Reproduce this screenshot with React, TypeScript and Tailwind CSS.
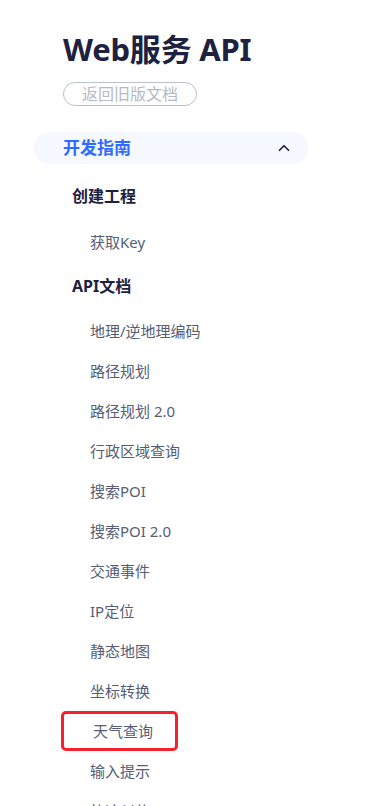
import { ChevronUp } from 'lucide-react';

const apiDocs = [
  '地理/逆地理编码',
  '路径规划',
  '路径规划 2.0',
  '行政区域查询',
  '搜索POI',
  '搜索POI 2.0',
  '交通事件',
  'IP定位',
  '静态地图',
  '坐标转换',
  '天气查询',
  '输入提示',
  '轨迹纠偏',
];

export default function App() {
  return (
    <div
      className="w-[366px] h-[806px] overflow-hidden bg-white"
      style={{ fontFamily: '"Noto Sans", "Noto Sans CJK SC", sans-serif' }}
    >
      <div className="pt-[25px] pl-[63px]">
        <h1 className="text-[31px] leading-[48px] font-bold text-[#1d2240] tracking-[-0.2px]">Web服务 API</h1>
        <button className="mt-[9px] h-[24px] w-[134px] rounded-full border border-[#b9c0cf] text-[16px] leading-[22px] text-[#b4bac6] bg-white">
          返回旧版文档
        </button>
      </div>

      <div className="mt-[26px] ml-[34px] w-[274px] h-[32px] rounded-[16px] bg-[#f5f8ff] flex items-center justify-between pl-[29px] pr-[15px]">
        <span className="text-[17px] font-bold text-[#2f6bff]">开发指南</span>
        <ChevronUp size={18} strokeWidth={2.25} className="text-[#1d2240]" />
      </div>

      <div className="pl-[72px] mt-[16px]">
        <div className="h-[32px] flex items-center text-[16px] font-bold text-[#1d2240]">创建工程</div>
      </div>
      <div className="pl-[90px] mt-[14px] h-[32px] flex items-center text-[15px] text-[#565d74]">获取Key</div>
      <div className="pl-[72px] mt-[12px] h-[32px] flex items-center text-[16px] font-bold text-[#1d2240]">API文档</div>

      <ul className="mt-[13px] flex flex-col gap-[8px]">
        {apiDocs.map((item) => (
          <li key={item} className="pl-[61px]">
            <div
              className={`h-[32px] w-[117px] flex items-center pl-[29px] text-[15px] text-[#565d74] whitespace-nowrap rounded-[5px] ${
                item === '天气查询' ? 'border-[3px] border-[#f5222d] pl-[26px] h-[40px] -my-[4px]' : ''
              }`}
            >
              {item}
            </div>
          </li>
        ))}
      </ul>
    </div>
  );
}
